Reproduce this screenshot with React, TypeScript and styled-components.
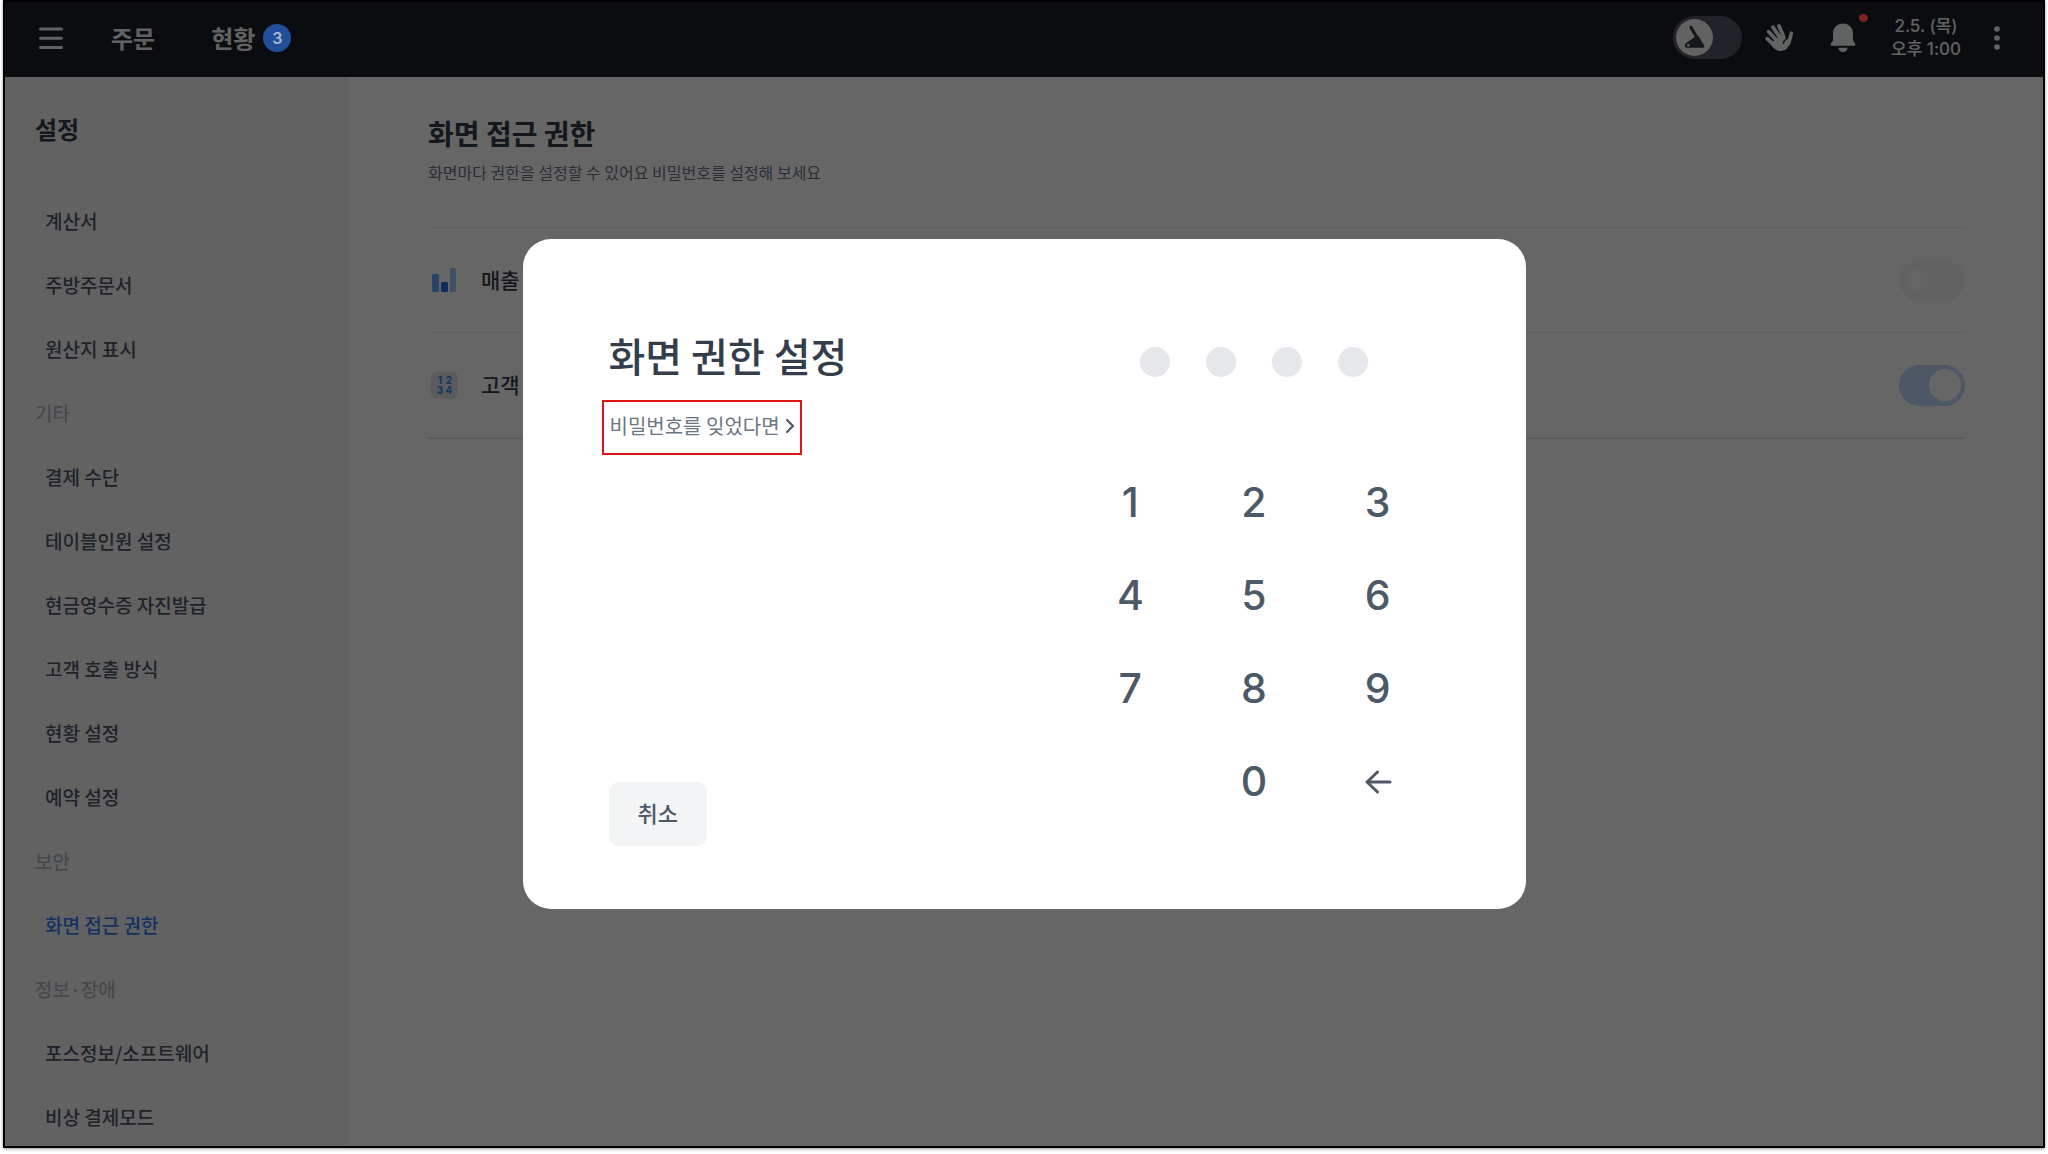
import React, { useState } from 'react';
import styled, { createGlobalStyle } from 'styled-components';

const GlobalStyle = createGlobalStyle`
  * { box-sizing: border-box; }
  body { margin: 0; background: #fff; }
  button { border: 0; padding: 0; background: none; font: inherit; color: inherit; cursor: pointer; }
  h1, h2, h3, p, ul { margin: 0; padding: 0; }
  ul { list-style: none; }
  svg { display: block; }
`;

const koreanFont = '"Noto Sans CJK KR", "Noto Sans", sans-serif';
const numberFont = 'Inter, "Noto Sans CJK KR", sans-serif';

const Page = styled.div`
  height: 100vh;
  padding: 0 3px 6px;
  font-family: ${koreanFont};
  color: #333d4b;
`;

const Frame = styled.div`
  position: relative;
  height: 100%;
  display: flex;
  flex-direction: column;
  border: 2px solid #000;
  box-shadow: 0 1px 3px rgba(0, 0, 0, 0.4);
  overflow: hidden;
`;

const Header = styled.header`
  flex: none;
  height: 75px;
  display: flex;
  align-items: center;
  justify-content: space-between;
  padding: 0 36px 4px 34px;
  background: #191f28;
  color: #f2f4f6;
`;

const HeaderGroup = styled.div`
  display: flex;
  align-items: center;
`;

const MenuButton = styled.button`
  margin-right: 48px;
`;

const Tabs = styled.nav`
  display: flex;
  align-items: center;
  gap: 56px;
`;

const Tab = styled.button`
  display: flex;
  align-items: center;
  gap: 8px;
  font-size: 24px;
  line-height: 32px;
  font-weight: 700;
`;

const Badge = styled.span`
  position: relative;
  z-index: 2;
  width: 28px;
  height: 28px;
  border-radius: 50%;
  background: #224f99;
  color: #a8b6cf;
  font-family: ${numberFont};
  font-size: 16px;
  line-height: 28px;
  font-weight: 600;
  text-align: center;
`;

const ModeSwitch = styled.button`
  width: 69px;
  height: 43px;
  padding: 3px;
  border-radius: 22px;
  background: #555866;
  margin-right: 22px;
`;

const IconButton = styled.button<{ $gap: number }>`
  position: relative;
  margin-right: ${(p) => p.$gap}px;
`;

const Dot = styled.span`
  position: absolute;
  z-index: 2;
  top: -9px;
  right: -12px;
  width: 9px;
  height: 8px;
  border-radius: 50%;
  background: #7f2329;
`;

const Clock = styled.time`
  font-family: ${numberFont};
  font-size: 17px;
  line-height: 23px;
  font-weight: 500;
  text-align: center;
  margin-right: 33px;
`;

const Body = styled.div`
  flex: 1;
  min-height: 0;
  display: flex;
`;

const Sidebar = styled.aside`
  flex: none;
  width: 344px;
  padding: 36px 0 0 30px;
  background: #f6f6f6;
  overflow: hidden;
`;

const SidebarTitle = styled.h2`
  font-size: 24px;
  line-height: 32px;
  font-weight: 700;
  margin-bottom: 44px;
`;

const NavLink = styled.a<{ $active?: boolean }>`
  display: block;
  padding-left: 10px;
  font-size: 19px;
  line-height: 64px;
  font-weight: 500;
  text-decoration: none;
  color: ${(p) => (p.$active ? '#3478f5' : '#4e5968')};
`;

const NavGroup = styled.h3`
  font-size: 19px;
  line-height: 64px;
  font-weight: 500;
  color: #b0b8c1;
`;

const Main = styled.main`
  flex: 1;
  padding: 36px 78px 0 79px;
  background: #fff;
`;

const PageTitle = styled.h1`
  font-size: 28px;
  line-height: 40px;
  font-weight: 700;
`;

const PageNote = styled.p`
  font-size: 16px;
  line-height: 24px;
  margin: 7px 0 43px;
  color: #6b7684;
`;

const PermissionList = styled.ul`
  border-top: 1px solid #ececee;
  border-bottom: 1px solid #e5e5e7;
`;

const PermissionRow = styled.li`
  height: 105px;
  display: flex;
  align-items: center;
  gap: 23px;
  padding-left: 3px;
  border-bottom: 1px solid #ececee;
  font-size: 21px;
  font-weight: 500;
`;

const RowLabel = styled.label`
  flex: 1;
  line-height: 32px;
  padding-bottom: 3px;
`;

const Toggle = styled.input`
  appearance: none;
  flex: none;
  display: flex;
  align-items: center;
  width: 66px;
  height: 41px;
  margin: 0;
  padding: 0 8px;
  border-radius: 21px;
  background: #f6f6f6;
  &::before {
    content: '';
    width: 22px;
    height: 22px;
    border-radius: 50%;
    background: #fcfcfc;
  }
  &:checked {
    justify-content: flex-end;
    padding: 0 4px;
    background: #c1dafd;
  }
  &:checked::before {
    width: 32px;
    height: 32px;
    background: #fff;
  }
`;

const Overlay = styled.div`
  position: absolute;
  inset: 0;
  z-index: 1;
  display: flex;
  align-items: center;
  justify-content: center;
  background: rgba(0, 0, 0, 0.6);
`;

const Dialog = styled.section`
  display: flex;
  justify-content: space-between;
  width: 1003px;
  max-width: 100%;
  min-height: 670px;
  padding: 63px 86px;
  border-radius: 28px;
  background: #fff;
`;

const DialogInfo = styled.div`
  display: flex;
  flex-direction: column;
  align-items: flex-start;
`;

const DialogTitle = styled.h2`
  padding-top: 25px;
  font-size: 40px;
  line-height: 56px;
  font-weight: 500;
`;

const ForgotLink = styled.a`
  display: flex;
  align-items: center;
  gap: 5px;
  height: 55px;
  margin: 17px 0 0 -7px;
  padding: 0 5px 3px 6px;
  border: 2px solid #e01414;
  font-size: 20px;
  line-height: 28px;
  text-decoration: none;
  color: #6b7684;
`;

const CancelButton = styled.button`
  height: 64px;
  margin-top: auto;
  padding: 0 29px 5px;
  border-radius: 10px;
  background: #f2f4f6;
  color: #4e5968;
  font-size: 22px;
  font-weight: 500;
`;

const PinPad = styled.div`
  display: flex;
  flex-direction: column;
  align-items: center;
  width: 371px;
`;

const PinDots = styled.div`
  display: flex;
  gap: 36px;
  padding: 45px 0 78px;
`;

const PinDot = styled.span<{ $filled: boolean }>`
  width: 30px;
  height: 30px;
  border-radius: 50%;
  background: ${(p) => (p.$filled ? '#3182f6' : '#e5e7eb')};
`;

const Keys = styled.div`
  display: grid;
  grid-template-columns: repeat(3, 1fr);
  grid-auto-rows: 93px;
  width: 100%;
`;

const Key = styled.button`
  display: flex;
  align-items: center;
  justify-content: center;
  font-family: ${numberFont};
  font-size: 41px;
  line-height: 48px;
  font-weight: 450;
  color: #4e5968;
`;

const MenuIcon = () => (
  <svg width="24" height="24" viewBox="0 0 24 24" stroke="currentColor" strokeWidth="3" strokeLinecap="round">
    <path d="M1.5 3h21M1.5 12.3h21M1.5 21.5h21" />
  </svg>
);

const ModeIcon = () => (
  <svg width="37" height="37" viewBox="0 0 37 37">
    <circle cx="18.5" cy="18.5" r="18.5" fill="#f5f5f6" />
    <path d="M15 8.500 23 22" stroke="#333d4b" strokeWidth="3.200" strokeLinecap="round" />
    <path d="m19.500 17.500 3-.500 5.700 9.800c.5 1-.1 2-1.200 2H11.500c-3 0-3.600-3.400-1.200-4.900Z" fill="#333d4b" />
    <circle cx="12.300" cy="26.200" r="1.300" fill="#f5f5f6" />
  </svg>
);

const HandIcon = () => (
  <svg width="30" height="30" viewBox="0 0 30 30" fill="none" stroke="currentColor" strokeLinecap="round" strokeLinejoin="round">
    <path d="M3.200 15.700 9 21M4.700 8.700l7.800 8.500M9 4.200l7 10.500M15 3l4.500 10.500" strokeWidth="3.800" />
    <path d="M27.300 10.200c-.7 3.300-1.500 7.300-3 10.800" strokeWidth="3.600" />
    <path d="M9 19.500 19 12.500l2.500 4.500 3.500-.5c-.5 3.500-1 6-2.500 8-2.500 3-8 3.500-11.500.5-1.500-1.300-2.500-3-3.500-4.500Z" fill="currentColor" strokeWidth="2" />
    <path d="M19.300 20.500c.3-2.300 1.600-3.800 3.500-4.300" stroke="#191f28" strokeWidth="1.200" />
  </svg>
);

const BellIcon = () => (
  <svg width="26" height="30" viewBox="0 0 26 30" fill="currentColor">
    <path d="M13 .5c-6 0-10 4.500-10 10v7L.8 20.800c-.6 1 0 1.900 1 1.900h22.400c1 0 1.600-.9 1-1.900L23 17.500v-7c0-5.500-4-10-10-10Z" />
    <path d="M8.500 24.800h9c0 2.500-2 4.400-4.500 4.400s-4.500-1.900-4.500-4.400Z" />
  </svg>
);

const MoreIcon = () => (
  <svg width="6" height="24" viewBox="0 0 6 24" fill="currentColor">
    <circle cx="3" cy="3" r="2.800" />
    <circle cx="3" cy="12" r="2.800" />
    <circle cx="3" cy="21" r="2.800" />
  </svg>
);

const SalesIcon = () => (
  <svg width="27" height="26" viewBox="0 0 27 26">
    <rect x="1" y="7" width="7" height="18" rx="1.500" fill="#64a8ff" />
    <rect x="10" y="15" width="7" height="10" rx="1.500" fill="#2272eb" />
    <rect x="19" y="1" width="6" height="24" rx="1.500" fill="#a9c8f7" />
  </svg>
);

const NumberTile = styled.span`
  display: grid;
  grid-template-columns: 9px 9px;
  place-content: center;
  width: 27px;
  height: 27px;
  border-radius: 6px;
  background: #e1e5ea;
  color: #3182f6;
  font-family: ${numberFont};
  font-size: 10px;
  line-height: 10px;
  font-weight: 700;
  text-align: center;
`;

const ChevronIcon = () => (
  <svg width="10" height="16" viewBox="0 0 10 16" fill="none" stroke="#4e5968" strokeWidth="2.200" strokeLinecap="round" strokeLinejoin="round">
    <path d="m2 2 6 6-6 6" />
  </svg>
);

const BackIcon = () => (
  <svg width="28" height="26" viewBox="0 0 28 26" fill="none" stroke="currentColor" strokeWidth="3" strokeLinecap="round" strokeLinejoin="round">
    <path d="M26 14H3M13.500 4 3 14l10.500 10" />
  </svg>
);

type NavEntry = { label: string; group?: boolean; active?: boolean };

const navEntries: NavEntry[] = [
  { label: '계산서' },
  { label: '주방주문서' },
  { label: '원산지 표시' },
  { label: '기타', group: true },
  { label: '결제 수단' },
  { label: '테이블인원 설정' },
  { label: '현금영수증 자진발급' },
  { label: '고객 호출 방식' },
  { label: '현황 설정' },
  { label: '예약 설정' },
  { label: '보안', group: true },
  { label: '화면 접근 권한', active: true },
  { label: '정보·장애', group: true },
  { label: '포스정보/소프트웨어' },
  { label: '비상 결제모드' },
];

export default function App() {
  const [pin, setPin] = useState('');
  const press = (digit: string) => setPin((p) => (p.length < 4 ? p + digit : p));

  return (
    <Page>
      <GlobalStyle />
      <Frame>
        <Header>
          <HeaderGroup>
            <MenuButton aria-label="메뉴"><MenuIcon /></MenuButton>
            <Tabs>
              <Tab>주문</Tab>
              <Tab>현황<Badge>3</Badge></Tab>
            </Tabs>
          </HeaderGroup>
          <HeaderGroup>
            <ModeSwitch role="switch" aria-checked="false" aria-label="모드"><ModeIcon /></ModeSwitch>
            <IconButton $gap={36} aria-label="호출"><HandIcon /></IconButton>
            <IconButton $gap={35} aria-label="알림"><BellIcon /><Dot /></IconButton>
            <Clock>2.5. (목)<br />오후 1:00</Clock>
            <IconButton $gap={7} aria-label="더보기"><MoreIcon /></IconButton>
          </HeaderGroup>
        </Header>
        <Body>
          <Sidebar>
            <SidebarTitle>설정</SidebarTitle>
            <nav>
              {navEntries.map((entry) =>
                entry.group ? (
                  <NavGroup key={entry.label}>{entry.label}</NavGroup>
                ) : (
                  <NavLink key={entry.label} href="#" $active={entry.active}>{entry.label}</NavLink>
                ),
              )}
            </nav>
          </Sidebar>
          <Main>
            <PageTitle>화면 접근 권한</PageTitle>
            <PageNote>화면마다 권한을 설정할 수 있어요 비밀번호를 설정해 보세요</PageNote>
            <PermissionList>
              <PermissionRow>
                <SalesIcon />
                <RowLabel htmlFor="sales">매출</RowLabel>
                <Toggle id="sales" type="checkbox" />
              </PermissionRow>
              <PermissionRow>
                <NumberTile aria-hidden="true"><span>1</span><span>2</span><span>3</span><span>4</span></NumberTile>
                <RowLabel htmlFor="customer">고객</RowLabel>
                <Toggle id="customer" type="checkbox" defaultChecked />
              </PermissionRow>
            </PermissionList>
          </Main>
        </Body>
        <Overlay>
          <Dialog role="dialog" aria-modal="true" aria-labelledby="dialog-title">
            <DialogInfo>
              <DialogTitle id="dialog-title">화면 권한 설정</DialogTitle>
              <ForgotLink href="#">비밀번호를 잊었다면<ChevronIcon /></ForgotLink>
              <CancelButton>취소</CancelButton>
            </DialogInfo>
            <PinPad>
              <PinDots>
                {[0, 1, 2, 3].map((i) => <PinDot key={i} $filled={i < pin.length} />)}
              </PinDots>
              <Keys>
                {['1', '2', '3', '4', '5', '6', '7', '8', '9'].map((digit) => (
                  <Key key={digit} onClick={() => press(digit)}>{digit}</Key>
                ))}
                <span />
                <Key onClick={() => press('0')}>0</Key>
                <Key aria-label="지우기" onClick={() => setPin((p) => p.slice(0, -1))}><BackIcon /></Key>
              </Keys>
            </PinPad>
          </Dialog>
        </Overlay>
      </Frame>
    </Page>
  );
}
